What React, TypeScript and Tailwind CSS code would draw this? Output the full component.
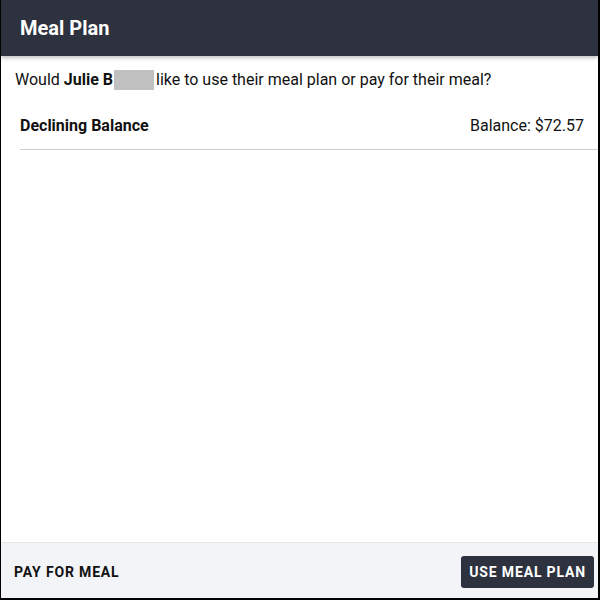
export default function App() {
  return (
    <div
      className="w-[600px] h-[600px] flex flex-col bg-white border-l border-r-2 border-b-2 border-black text-[#111]"
      style={{ fontFamily: "Roboto, 'Liberation Sans', sans-serif" }}
    >
      <div className="h-[56px] shrink-0 bg-[#2d323e] flex items-center px-[19px] shadow-[0_2px_4px_rgba(0,0,0,0.25)] relative z-10">
        <h1 className="text-white text-[20px] font-bold">Meal Plan</h1>
      </div>
      <div className="flex-1 flex flex-col">
        <p className="text-[16px] leading-[24px] pl-[14px] pt-[12px] flex items-center">
          Would&nbsp;<span className="font-bold">Julie B</span>
          <span className="inline-block w-[40px] h-[20px] bg-[#c0c0c0] ml-[1px] mr-[2px]"></span>
          like to use their meal plan or pay for their meal?
        </p>
        <div className="ml-[19px] h-[48px] flex items-center justify-between pr-[14px] border-b border-[#cfcfcf] mt-[10px]">
          <span className="font-bold text-[16px]">Declining Balance</span>
          <span className="text-[16px]">Balance: $72.57</span>
        </div>
      </div>
      <div className="h-[56px] shrink-0 bg-[#f3f4f8] border-t border-[#e6e7ea] flex items-center justify-between pl-[13px] pr-[4px] pt-[3px]">
        <button className="text-[14px] font-bold tracking-[0.06em] text-[#111]">PAY FOR MEAL</button>
        <button className="h-[32px] px-[8px] rounded-[3px] bg-[#2d323e] text-white text-[14px] font-bold tracking-[0.06em]">
          USE MEAL PLAN
        </button>
      </div>
    </div>
  );
}
